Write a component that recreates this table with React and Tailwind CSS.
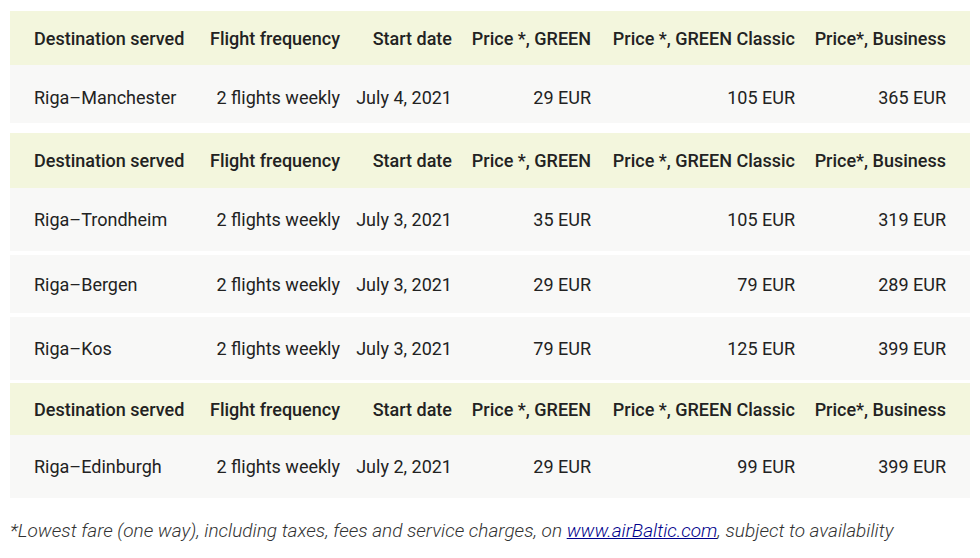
const cols = "grid grid-cols-[161px_145px_112px_139px_204px_151px] items-center px-6";

const headers = [
    "Destination served",
    "Flight frequency",
    "Start date",
    "Price *, GREEN",
    "Price *, GREEN Classic",
    "Price*, Business",
];

function HeaderRow({ h }) {
    return (
        <div className={`${cols} bg-[#f3f6dd] font-medium ${h}`}>
            {headers.map((t, i) => (
                <div key={t} className={i === 0 ? "text-left whitespace-nowrap" : "text-right whitespace-nowrap"}>
                    {t}
                </div>
            ))}
        </div>
    );
}

function DataRow({ cells, h }) {
    return (
        <div className={`${cols} bg-[#f8f8f7] ${h}`}>
            {cells.map((t, i) => (
                <div key={i} className={i === 0 ? "text-left whitespace-nowrap" : "text-right whitespace-nowrap"}>
                    {t}
                </div>
            ))}
        </div>
    );
}

export default function App() {
    return (
        <div className="w-[980px] h-[558px] bg-white overflow-hidden pt-[11px] px-[10px] font-['Roboto',sans-serif] text-[18px] text-[#222]">
            <div className="w-[960px] flex flex-col">
                <HeaderRow h="h-[54px]" />
                <DataRow h="h-[58px] pt-[6px]" cells={["Riga–Manchester", "2 flights weekly", "July 4, 2021", "29 EUR", "105 EUR", "365 EUR"]} />

                <div className="mt-[10px]">
                    <HeaderRow h="h-[55px]" />
                    <DataRow h="h-[63px]" cells={["Riga–Trondheim", "2 flights weekly", "July 3, 2021", "35 EUR", "105 EUR", "319 EUR"]} />
                </div>
                <div className="mt-[4px]">
                    <DataRow h="h-[58px]" cells={["Riga–Bergen", "2 flights weekly", "July 3, 2021", "29 EUR", "79 EUR", "289 EUR"]} />
                </div>
                <div className="mt-[4px]">
                    <DataRow h="h-[63px]" cells={["Riga–Kos", "2 flights weekly", "July 3, 2021", "79 EUR", "125 EUR", "399 EUR"]} />
                </div>

                <div className="mt-[3px]">
                    <HeaderRow h="h-[52px]" />
                    <DataRow h="h-[63px]" cells={["Riga–Edinburgh", "2 flights weekly", "July 2, 2021", "29 EUR", "99 EUR", "399 EUR"]} />
                </div>
            </div>

            <p className="mt-[19px] italic font-light text-[19px] text-[#333] whitespace-nowrap">
                *Lowest fare (one way), including taxes, fees and service charges, on{" "}
                <a href="#" className="text-[#00008b] underline">www.airBaltic.com</a>, subject to availability
            </p>
        </div>
    );
}
